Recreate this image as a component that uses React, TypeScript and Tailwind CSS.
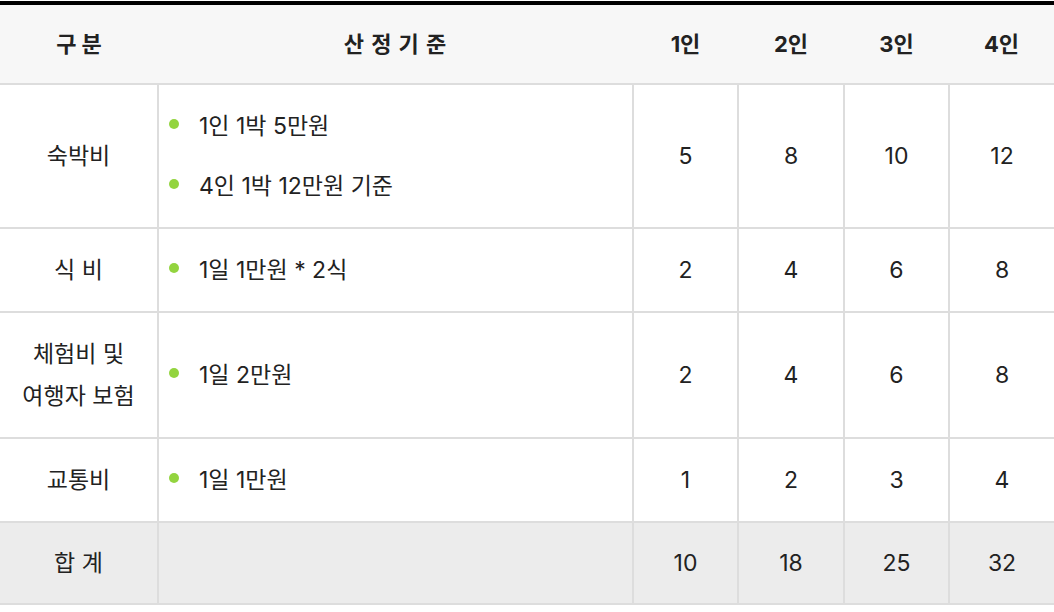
import React from "react";

interface CostRow {
  label: string[];
  items: string[];
  values: number[];
}

const rows: CostRow[] = [
  { label: ["숙박비"], items: ["1인 1박 5만원", "4인 1박 12만원 기준"], values: [5, 8, 10, 12] },
  { label: ["식 비"], items: ["1일 1만원 * 2식"], values: [2, 4, 6, 8] },
  { label: ["체험비 및", "여행자 보험"], items: ["1일 2만원"], values: [2, 4, 6, 8] },
  { label: ["교통비"], items: ["1일 1만원"], values: [1, 2, 3, 4] },
];

const totals = [10, 18, 25, 32];

const App = () => {
  return (
    <div
      className="w-[1054px] h-[612px] bg-white pt-px text-[#222]"
      style={{ fontFamily: 'Inter, "Noto Sans CJK KR", sans-serif' }}
    >
      <table className="w-full table-fixed border-collapse border-t-4 border-black text-[23px] leading-[42px]">
        <colgroup>
          <col className="w-[158px]" />
          <col className="w-[475px]" />
          <col className="w-[105px]" />
          <col className="w-[106px]" />
          <col className="w-[105px]" />
          <col className="w-[105px]" />
        </colgroup>
        <thead>
          {/* 헤더 */}
          <tr className="bg-[#f7f7f7] border-b-2 border-[#dddddd] text-[22px]">
            <th className="h-[81px] font-bold text-center">구 분</th>
            <th className="font-bold text-center tracking-[1px]">산 정 기 준</th>
            <th className="font-bold text-center">1인</th>
            <th className="font-bold text-center">2인</th>
            <th className="font-bold text-center">3인</th>
            <th className="font-bold text-center">4인</th>
          </tr>
        </thead>
        <tbody>
          {rows.map((row, i) => (
            <tr key={i} className="border-b-2 border-[#dddddd]">
              <td className="py-[20px] text-center align-middle">
                {row.label.map((l, j) => (
                  <div key={j}>{l}</div>
                ))}
              </td>
              <td className="border-l-2 border-[#dddddd] py-[20px] pl-[10px] align-middle">
                <ul className="flex flex-col gap-[18px]">
                  {row.items.map((item, j) => (
                    <li key={j} className="flex items-center gap-[20px]">
                      <span className="w-[10px] h-[10px] rounded-full bg-[#93d43f] -mt-[5px]" />
                      <span>{item}</span>
                    </li>
                  ))}
                </ul>
              </td>
              {row.values.map((v, j) => (
                <td key={j} className="border-l-2 border-[#dddddd] text-center align-middle">
                  {v}
                </td>
              ))}
            </tr>
          ))}
          {/* 합계 */}
          <tr className="bg-[#ececec] border-b-2 border-[#dddddd]">
            <td className="h-[82px] text-center align-middle">합 계</td>
            <td className="border-l-2 border-[#dddddd]" />
            {totals.map((v, j) => (
              <td key={j} className="border-l-2 border-[#dddddd] text-center align-middle">
                {v}
              </td>
            ))}
          </tr>
        </tbody>
      </table>
    </div>
  );
};

export default App;
